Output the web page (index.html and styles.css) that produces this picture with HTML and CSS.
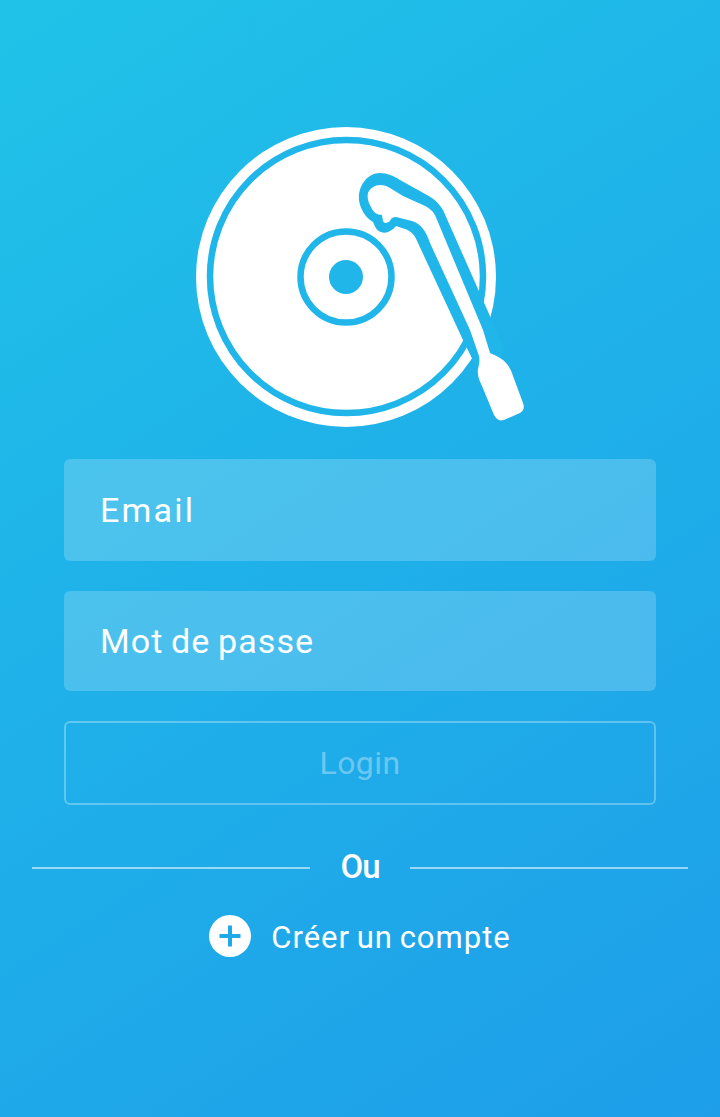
FILE: index.html
```html
<!DOCTYPE html>
<html lang="fr">
<head>
    <meta charset="UTF-8">
    <meta name="viewport" content="width=device-width, initial-scale=1.0">
    <title>Login</title>
    <link rel="stylesheet" href="styles.css">
</head>
<body>
    <div class="logo">
        <svg width="340" height="310" viewBox="190 120 340 310">
            <!-- disc -->
            <circle cx="346" cy="277" r="150" fill="#fff"/>
            <circle cx="346.5" cy="276.5" r="136.5" fill="none" stroke="#20b6e9" stroke-width="6.5"/>
            <circle cx="346" cy="277" r="45.5" fill="none" stroke="#20b6e9" stroke-width="6.5"/>
            <circle cx="346" cy="277" r="17" fill="#20b6e9"/>
            <!-- tonearm outline -->
            <path fill="#20b6e9" d="M380 173C387 173 394 176 400 180L427 195C433 198 439 203 443 210L505 350L485 385L463 340L418 243C415 235 411 231 405 229L396 226C392 231 386 234 381 232C377 231 375 227 373 222C366 218 360 209 359 200C358 185 368 173 380 173Z"/>
            <!-- tonearm inside -->
            <path fill="#fff" d="M380 185C384 185 387 186 390 188L403 196L423 205C428 207 432 210 435 215L483 330L470 330L430 243C426 231 421 224 412 221L396 217C393 217 391 218 390 221C388 223 384 224 383 221L382 215C377 215 373 212 371 207C368 202 367 197 368 193C370 188 375 185 380 185Z"/>
            <!-- handle -->
            <path fill="#fff" d="M470 330L483 330L490 353C497 356 503 359 507 364C510 368 512 372 513 376L523 403C525 408 523 411 520 413L506 419C500 422 497 420 494 415L482 386C479 380 477 374 478 369C479 364 480 361 479 356Z"/>
        </svg>
    </div>

    <div class="form">
        <div class="field field-email">Email</div>
        <div class="field field-pass">Mot de passe</div>
        <div class="login-btn">Login</div>
    </div>

    <div class="divider">
        <span class="line"></span>
        <span class="or">Ou</span>
        <span class="line"></span>
    </div>

    <div class="create">
        <svg class="plus" width="42" height="42" viewBox="0 0 42 42">
            <circle cx="21" cy="21" r="21" fill="#fff"/>
            <path d="M21 10.5V31.5M10.5 21H31.5" stroke="#1fa9e9" stroke-width="4" fill="none"/>
        </svg>
        <span class="create-text">Créer un compte</span>
    </div>
</body>
</html>
```

FILE: styles.css
```css
html, body {
    margin: 0;
    padding: 0;
}
body {
    width: 720px;
    height: 1117px;
    overflow: hidden;
    font-family: Roboto, sans-serif;
    color: white;
    background: linear-gradient(147deg, #20c3e8 0%, #1fb3e9 40%, #1e9ee9 100%);
}
.logo {
    display: flex;
    padding: 120px 0 0 190px;
    height: 310px;
}
.form {
    display: flex;
    flex-direction: column;
    margin: 29px 64px 0;
}
.field {
    display: flex;
    align-items: center;
    padding-left: 36px;
    background: rgba(255,255,255,0.2);
    border-radius: 6px;
    font-size: 34px;
}
.field-email {
    height: 102px;
    margin-bottom: 30px;
    letter-spacing: 2.2px;
}
.field-pass {
    height: 100px;
    margin-bottom: 30px;
    letter-spacing: 1.1px;
    word-spacing: -2px;
}
.login-btn {
    height: 80px;
    line-height: 80px;
    text-align: center;
    border: 2px solid rgba(255,255,255,0.3);
    border-radius: 6px;
    font-size: 32px;
    letter-spacing: 0.4px;
    color: rgba(255,255,255,0.35);
}
.divider {
    display: flex;
    align-items: center;
    margin: 44px 32px 0;
    height: 38px;
}
.line {
    flex: 1;
    height: 2px;
    background: rgba(255,255,255,0.55);
}
.or {
    width: 100px;
    padding-bottom: 3px;
    text-align: center;
    font-size: 33px;
    font-weight: 500;
    letter-spacing: -1px;
}
.create {
    display: flex;
    align-items: center;
    justify-content: center;
    gap: 20px;
    margin-top: 27px;
    height: 44px;
}
.create-text {
    padding-top: 2px;
    font-size: 31px;
    letter-spacing: 1px;
    word-spacing: -2px;
}
```
